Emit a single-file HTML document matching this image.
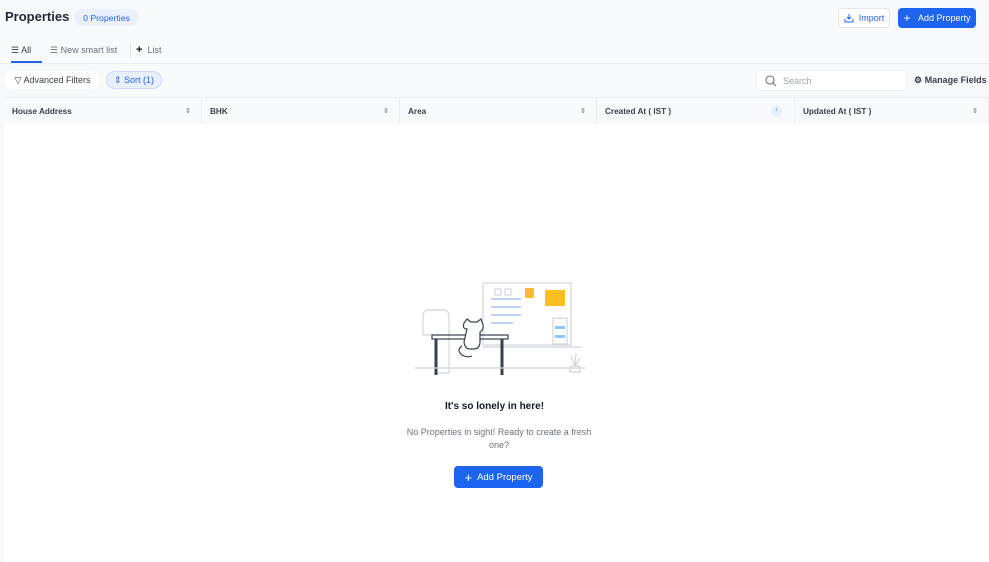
<!DOCTYPE html><html><head><style>
*{box-sizing:border-box;margin:0;padding:0}
body{width:989px;height:562px;overflow:hidden;background:#f8f9fb;font-family:"Liberation Sans",sans-serif;color:#1f2937;position:relative}
.a{position:absolute}
.btn{position:absolute;border-radius:4px;font-size:9px;display:flex;align-items:center;justify-content:center;gap:5px}
.th{position:absolute;top:98px;height:26px;font-size:8.2px;font-weight:bold;color:#374151;display:flex;align-items:center;padding-left:8px;border-right:1px solid #eceef2}
.sa{position:absolute;right:10px;color:#9ca3af;font-size:7px}
</style></head><body>
<div class="a" style="left:5px;top:9px;font-size:13px;font-weight:bold;color:#1f2937">Properties</div>
<div class="a" style="left:74px;top:9px;height:17px;width:65px;border-radius:9px;background:#eaf1fd;color:#2563eb;font-size:8.7px;display:flex;align-items:center;justify-content:center">0 Properties</div>
<div class="btn" style="left:838px;top:8px;width:52px;height:20px;background:#fff;border:1px solid #e5e7eb;color:#2563eb"><svg width="10" height="10" viewBox="0 0 10 10" fill="none" stroke="#2563eb" stroke-width="1"><path d="M5 1v5M3 4l2 2 2-2M1 6v3h8V6"/></svg>Import</div>
<div class="btn" style="left:898px;top:8px;width:78px;height:20px;background:#1d64f0;color:#fff"><span style="font-size:12px">+</span>&nbsp;Add Property</div>
<div class="a" style="left:985px;top:12px;color:#6b7280;font-size:9px">⋮</div>
<div class="a" style="left:11px;top:45px;font-size:9px;color:#374151">☰ All</div>
<div class="a" style="left:11px;top:61px;width:31px;height:2px;background:#2563eb"></div>
<div class="a" style="left:50px;top:45px;font-size:9px;color:#6b7280">☰ New smart list</div>
<div class="a" style="left:130px;top:42px;width:1px;height:16px;background:#e5e7eb"></div>
<div class="a" style="left:136px;top:44px;font-size:9px;color:#6b7280"><b style="color:#111;font-size:11px">+</b>&nbsp; List</div>
<div class="a" style="left:0;top:63px;width:989px;height:1px;background:#eceef2"></div>
<div class="btn" style="left:5px;top:71px;width:95px;height:18px;background:#fff;border-radius:9px;color:#374151">▽ Advanced Filters</div>
<div class="btn" style="left:106px;top:71px;width:56px;height:18px;background:#e8f0fd;border:1px solid #c9dbfb;border-radius:9px;color:#2563eb">⇕ Sort (1)</div>
<div class="a" style="left:756px;top:70px;width:151px;height:21px;background:#fff;border-radius:4px;border:1px solid #eef0f3;font-size:9px;color:#9ca3af;padding:5px 0 0 26px">Search<svg class="a" style="left:8px;top:4px" width="12" height="12" viewBox="0 0 12 12" fill="none" stroke="#6b7280" stroke-width="1.1"><circle cx="5" cy="5" r="4"/><path d="M8 8l3 3"/></svg></div>
<div class="a" style="left:914px;top:75px;font-size:9px;color:#374151;font-weight:bold;white-space:nowrap">⚙ Manage Fields</div>
<div class="a" style="left:4px;top:97px;width:985px;height:1px;background:#eceef2"></div>
<div class="th" style="left:4px;width:198px">House Address<span class="sa">⇕</span></div>
<div class="th" style="left:202px;width:198px">BHK<span class="sa">⇕</span></div>
<div class="th" style="left:400px;width:197px">Area<span class="sa">⇕</span></div>
<div class="th" style="left:597px;width:198px">Created At ( IST )<span class="sa" style="color:#3b82f6;background:#e8f0fd;border-radius:50%;width:11px;height:11px;text-align:center;right:12px">↓</span></div>
<div class="th" style="left:795px;width:194px">Updated At ( IST )<span class="sa">⇕</span></div>
<div class="a" style="left:4px;top:124px;width:985px;height:438px;background:#fff"></div>
<svg class="a" style="left:410px;top:280px" width="180" height="100" viewBox="0 0 180 100" fill="none" stroke="#d1d5db" stroke-width="1.2">
<rect x="73" y="3" width="88" height="62"/><line x1="73" y1="67" x2="171" y2="67"/>
<rect x="85" y="9" width="6" height="6"/><rect x="95" y="9" width="6" height="6"/>
<rect x="115" y="8" width="9" height="10" fill="#fbbf24" stroke="none"/>
<rect x="135" y="10" width="20" height="16" fill="#fbbf24" stroke="none"/>
<g stroke="#93b4f5"><line x1="81" y1="19" x2="111" y2="19"/><line x1="81" y1="27" x2="111" y2="27"/><line x1="81" y1="35" x2="111" y2="35"/><line x1="81" y1="43" x2="103" y2="43"/></g>
<rect x="143" y="38" width="14" height="26"/><rect x="145" y="46" width="10" height="3" fill="#93c5fd" stroke="none"/><rect x="145" y="55" width="10" height="3" fill="#93c5fd" stroke="none"/>
<path d="M13 55V36q0-6 6-6h14q6 0 6 6v19M13 55h26v38h-14"/>
<rect x="22" y="55" width="76" height="4" stroke="#374151"/>
<path d="M26 59v36M92 59v36" stroke="#374151" stroke-width="3"/>
<path d="M57 49q-5 0-3-6l3-4 4 3h6l4-3 2 6q1 5-3 7v11q-1 6-6 6h-4q-5 0-6-7z" fill="#fff" stroke="#374151"/>
<path d="M52 66q-6 4 0 9q6 3 10 1" stroke="#374151"/>
<line x1="5" y1="88" x2="175" y2="88"/>
<path d="M160 92h10l-1-6h-8zM165 86l-4-10M165 86l1-13M165 86l5-8" />
</svg>
<div class="a" style="left:0;width:989px;top:401px;text-align:center;font-size:10px;font-weight:bold;color:#111827">It's so lonely in here!</div>
<div class="a" style="left:398px;width:202px;top:426px;text-align:center;font-size:9px;line-height:13px;color:#6b7280">No Properties in sight! Ready to create a fresh one?</div>
<div class="btn" style="left:454px;top:466px;width:89px;height:22px;background:#1d64f0;color:#fff;font-size:9.5px"><span style="font-size:13px">+</span> Add Property</div>
</body></html>
